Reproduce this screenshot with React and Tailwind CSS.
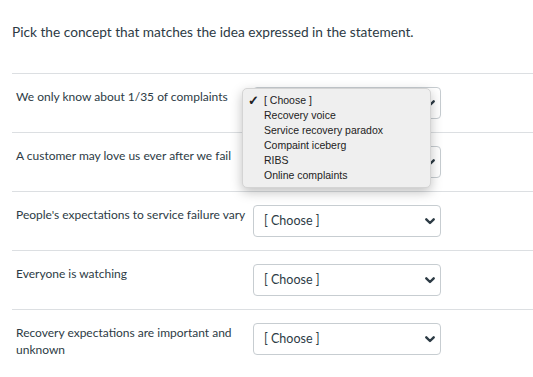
const rows = [
  'We only know about 1/35 of complaints',
  'A customer may love us ever after we fail',
  "People's expectations to service failure vary",
  'Everyone is watching',
  'Recovery expectations are important and unknown',
]

const options = [
  '[ Choose ]',
  'Recovery voice',
  'Service recovery paradox',
  'Compaint iceberg',
  'RIBS',
  'Online complaints',
]

function Chevron() {
  return (
    <svg width="10" height="7" viewBox="0 0 10 7" className="shrink-0">
      <path d="M1.3 1.3 L5 5 L8.7 1.3" fill="none" stroke="#2d3b45" strokeWidth="2.4" strokeLinecap="round" strokeLinejoin="round" />
    </svg>
  )
}

function SelectBox() {
  return (
    <div className="flex h-[32px] w-[188px] items-center justify-between rounded-[4px] border border-[#c7cdd1] bg-white pl-[10px] pr-[5px] text-[12.5px] text-[#2d3b45]">
      <span className="whitespace-pre">[ Choose ]</span>
      <Chevron />
    </div>
  )
}

function OpenMenu() {
  return (
    <div className="absolute left-[-11px] top-[1px] z-10 w-[189px] rounded-[5px] border border-[#d4d4d4] bg-[#efefef] py-[4px] shadow-[0_4px_12px_rgba(0,0,0,0.25)] font-['Liberation_Sans',sans-serif] text-[10.5px] text-[#222]">
      {options.map((opt, i) => (
        <div key={opt} className="flex h-[15px] items-center">
          <span className="w-[21px] pl-[5px] text-[13px] font-bold leading-none">{i === 0 ? '✓' : ''}</span>
          <span>{opt}</span>
        </div>
      ))}
    </div>
  )
}

export default function App() {
  return (
    <div className="min-h-[377px] bg-white pl-[12px] font-['Lato',sans-serif] text-[#2d3b45]">
      <p className="pt-[22px] text-[13.7px] leading-[20px]">
        Pick the concept that matches the idea expressed in the statement.
      </p>

      <div className="mt-[31px]">
        {rows.map((label, i) => (
          <div key={label} className="flex items-start border-t border-[#dcdfe2] py-[13px]">
            <div className="mt-[1px] w-[241px] pl-[4px] text-[12px] leading-[17px]">{label}</div>
            <div className="relative">
              <SelectBox />
              {i === 0 && <OpenMenu />}
            </div>
          </div>
        ))}
      </div>
    </div>
  )
}
